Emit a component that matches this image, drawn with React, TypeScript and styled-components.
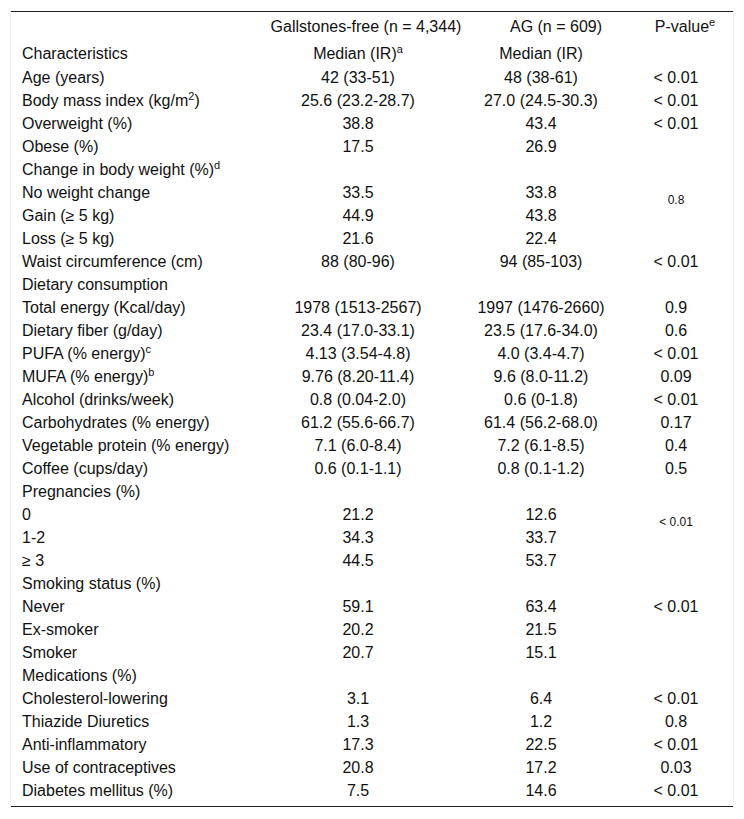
import styled, { createGlobalStyle } from 'styled-components';

const GlobalStyle = createGlobalStyle`
  html, body {
    margin: 0;
    padding: 0;
    background: #fff;
  }
  body {
    font-family: "Liberation Sans", Arial, sans-serif;
    color: #111;
  }
`;

const Frame = styled.div`
  margin: 11px 0 0 10px;
  width: 722px;
  border-left: 1px solid #ececec;
  border-right: 1px solid #ececec;
`;

const Table = styled.table`
  width: 722px;
  border-collapse: collapse;
  table-layout: fixed;
  border-top: 1px solid #222;
  border-bottom: 1px solid #222;
  font-size: 16px;
  margin-bottom: 5px;
`;

const Body = styled.tbody`
  tr:last-child td {
    padding-bottom: 4px;
  }
`;

const Row = styled.tr<{ $h?: number }>`
  height: ${p => p.$h ?? 23}px;
`;

const Label = styled.td`
  padding: 0 0 0 11px;
  text-align: left;
  vertical-align: middle;
  white-space: nowrap;
  line-height: 23px;
`;

const Cell = styled.td<{ $shift?: number }>`
  padding: 0 0 0 ${p => (p.$shift ?? 0) * 2}px;
  text-align: center;
  vertical-align: middle;
  white-space: nowrap;
  line-height: 23px;
`;

const MergedP = styled.td`
  padding: 0 0 7px 0;
  text-align: center;
  vertical-align: middle;
  font-size: 12px;
  line-height: 14px;
`;

const Sup = styled.sup`
  font-size: 11px;
  line-height: 0;
  vertical-align: 6px;
`;

type Line = {
  label: React.ReactNode;
  a?: string;
  b?: string;
  p?: string;
  span?: { text: string; rows: number };
  skipP?: boolean;
};

const rows: Line[] = [
  { label: 'Age (years)', a: '42 (33-51)', b: '48 (38-61)', p: '< 0.01' },
  {
    label: (
      <>
        Body mass index (kg/m<Sup>2</Sup>)
      </>
    ),
    a: '25.6 (23.2-28.7)',
    b: '27.0 (24.5-30.3)',
    p: '< 0.01',
  },
  { label: 'Overweight (%)', a: '38.8', b: '43.4', p: '< 0.01' },
  { label: 'Obese (%)', a: '17.5', b: '26.9', p: '' },
  {
    label: (
      <>
        Change in body weight (%)<Sup>d</Sup>
      </>
    ),
    span: { text: '0.8', rows: 4 },
  },
  { label: 'No weight change', a: '33.5', b: '33.8', skipP: true },
  { label: 'Gain (≥ 5 kg)', a: '44.9', b: '43.8', skipP: true },
  { label: 'Loss (≥ 5 kg)', a: '21.6', b: '22.4', skipP: true },
  { label: 'Waist circumference (cm)', a: '88 (80-96)', b: '94 (85-103)', p: '< 0.01' },
  { label: 'Dietary consumption', p: '' },
  { label: 'Total energy (Kcal/day)', a: '1978 (1513-2567)', b: '1997 (1476-2660)', p: '0.9' },
  { label: 'Dietary fiber (g/day)', a: '23.4 (17.0-33.1)', b: '23.5 (17.6-34.0)', p: '0.6' },
  {
    label: (
      <>
        PUFA (% energy)<Sup>c</Sup>
      </>
    ),
    a: '4.13 (3.54-4.8)',
    b: '4.0 (3.4-4.7)',
    p: '< 0.01',
  },
  {
    label: (
      <>
        MUFA (% energy)<Sup>b</Sup>
      </>
    ),
    a: '9.76 (8.20-11.4)',
    b: '9.6 (8.0-11.2)',
    p: '0.09',
  },
  { label: 'Alcohol (drinks/week)', a: '0.8 (0.04-2.0)', b: '0.6 (0-1.8)', p: '< 0.01' },
  { label: 'Carbohydrates (% energy)', a: '61.2 (55.6-66.7)', b: '61.4 (56.2-68.0)', p: '0.17' },
  { label: 'Vegetable protein (% energy)', a: '7.1 (6.0-8.4)', b: '7.2 (6.1-8.5)', p: '0.4' },
  { label: 'Coffee (cups/day)', a: '0.6 (0.1-1.1)', b: '0.8 (0.1-1.2)', p: '0.5' },
  { label: 'Pregnancies (%)', span: { text: '< 0.01', rows: 4 } },
  { label: '0', a: '21.2', b: '12.6', skipP: true },
  { label: '1-2', a: '34.3', b: '33.7', skipP: true },
  { label: '≥ 3', a: '44.5', b: '53.7', skipP: true },
  { label: 'Smoking status (%)', p: '' },
  { label: 'Never', a: '59.1', b: '63.4', p: '< 0.01' },
  { label: 'Ex-smoker', a: '20.2', b: '21.5', p: '' },
  { label: 'Smoker', a: '20.7', b: '15.1', p: '' },
  { label: 'Medications (%)', p: '' },
  { label: 'Cholesterol-lowering', a: '3.1', b: '6.4', p: '< 0.01' },
  { label: 'Thiazide Diuretics', a: '1.3', b: '1.2', p: '0.8' },
  { label: 'Anti-inflammatory', a: '17.3', b: '22.5', p: '< 0.01' },
  { label: 'Use of contraceptives', a: '20.8', b: '17.2', p: '0.03' },
  { label: 'Diabetes mellitus (%)', a: '7.5', b: '14.6', p: '< 0.01' },
];

export default function App() {
  return (
    <>
      <GlobalStyle />
      <Frame>
        <Table>
          <colgroup>
            <col style={{ width: 242 }} />
            <col style={{ width: 210 }} />
            <col style={{ width: 156 }} />
            <col style={{ width: 114 }} />
          </colgroup>
          <thead>
            <Row $h={30}>
              <Label />
              <Cell $shift={8}>Gallstones-free (n = 4,344)</Cell>
              <Cell $shift={15}>AG (n = 609)</Cell>
              <Cell $shift={9}>
                P-value<Sup>e</Sup>
              </Cell>
            </Row>
            <Row $h={24}>
              <Label>Characteristics</Label>
              <Cell>
                Median (IR)<Sup>a</Sup>
              </Cell>
              <Cell>Median (IR)</Cell>
              <Cell />
            </Row>
          </thead>
          <Body>
            {rows.map((r, i) => (
              <Row key={i}>
                <Label>{r.label}</Label>
                <Cell>{r.a ?? ''}</Cell>
                <Cell>{r.b ?? ''}</Cell>
                {r.span ? (
                  <MergedP rowSpan={r.span.rows}>{r.span.text}</MergedP>
                ) : r.skipP ? null : (
                  <Cell>{r.p ?? ''}</Cell>
                )}
              </Row>
            ))}
          </Body>
        </Table>
      </Frame>
    </>
  );
}
